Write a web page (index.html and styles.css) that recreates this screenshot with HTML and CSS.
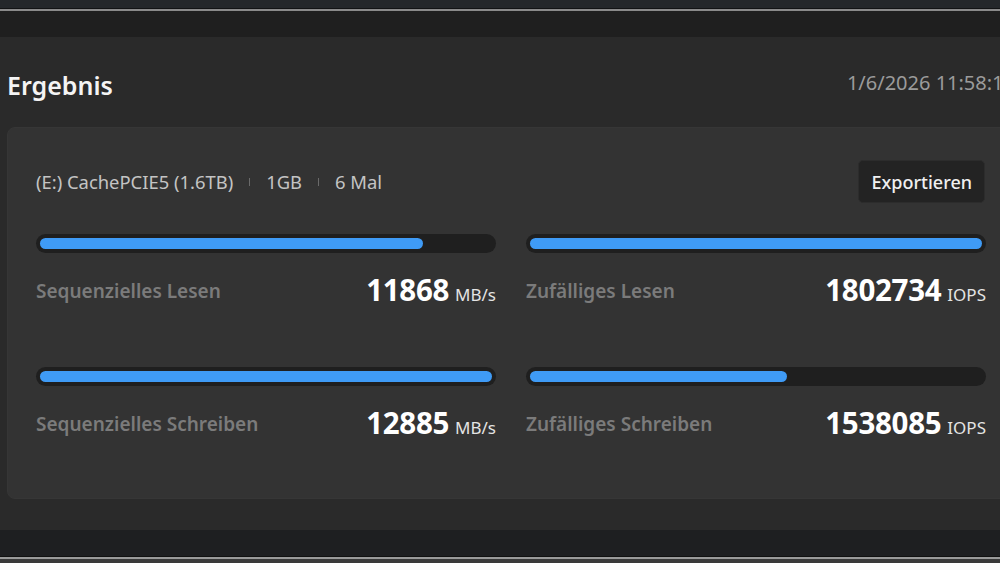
FILE: index.html
```html
<!DOCTYPE html>
<html lang="de">
<head>
<meta charset="utf-8">
<title>Ergebnis</title>
<link rel="stylesheet" href="styles.css">
</head>
<body>
<div class="screen">
  <div class="topstrip"></div>
  <div class="topband"></div>
  <main class="panel">
    <header class="head">
      <h1 class="title">Ergebnis</h1>
      <div class="stamp">1/6/2026 11:58:17</div>
    </header>
    <section class="card">
      <div class="inforow">
        <div class="info">
          <span>(E:) CachePCIE5 (1.6TB)</span>
          <span class="sep"></span>
          <span>1GB</span>
          <span class="sep"></span>
          <span>6 Mal</span>
        </div>
        <button class="export">Exportieren</button>
      </div>
      <div class="grid">
        <div class="metric">
          <div class="track"><div class="fill" style="width:84.7%"></div></div>
          <div class="row">
            <span class="label">Sequenzielles Lesen</span>
            <span class="value">11868<span class="unit">MB/s</span></span>
          </div>
        </div>
        <div class="metric">
          <div class="track"><div class="fill" style="width:100%"></div></div>
          <div class="row">
            <span class="label">Zufälliges Lesen</span>
            <span class="value">1802734<span class="unit">IOPS</span></span>
          </div>
        </div>
        <div class="metric">
          <div class="track"><div class="fill" style="width:100%"></div></div>
          <div class="row">
            <span class="label">Sequenzielles Schreiben</span>
            <span class="value">12885<span class="unit">MB/s</span></span>
          </div>
        </div>
        <div class="metric">
          <div class="track"><div class="fill" style="width:56.9%"></div></div>
          <div class="row">
            <span class="label">Zufälliges Schreiben</span>
            <span class="value">1538085<span class="unit">IOPS</span></span>
          </div>
        </div>
      </div>
    </section>
  </main>
  <div class="bottomband"></div>
  <div class="bottomstrip"></div>
</div>
</body>
</html>
```
FILE: styles.css
```css
html, body {
  margin: 0;
  padding: 0;
  width: 1000px;
  height: 563px;
  overflow: hidden;
  background: #2a2a2a;
  font-family: "Noto Sans", "Open Sans", sans-serif;
}
.screen {
  width: 1000px;
  height: 563px;
  display: flex;
  flex-direction: column;
  overflow: hidden;
}
.topstrip {
  height: 8px;
  background: #24272a;
  border-bottom: 1px solid #121314;
}
.topband {
  height: 26px;
  background: #1f1f1f;
  border-top: 2px solid #8a8a8a;
}
.panel {
  height: 493px;
  background: #2a2a2a;
  padding: 0 0 0 7px;
  box-sizing: border-box;
  display: flex;
  flex-direction: column;
}
.head {
  width: 1008px;
  height: 90px;
  display: flex;
  align-items: center;
  justify-content: space-between;
}
.title {
  margin: 0;
  font-size: 25px;
  font-weight: 600;
  color: #f4f4f4;
  padding-top: 6px;
}
.stamp {
  font-size: 20px;
  color: #9b9b9b;
  white-space: nowrap;
}
.card {
  width: 1008px;
  height: 372px;
  box-sizing: border-box;
  background: #333333;
  border-radius: 8px;
  border: 1px solid #363636;
  padding: 32px 29px 0 28px;
  flex: none;
}
.inforow {
  display: flex;
  align-items: center;
  justify-content: space-between;
  height: 43px;
}
.info {
  display: flex;
  align-items: center;
  gap: 16px;
  font-size: 18.4px;
  color: #c4c4c4;
}
.sep {
  width: 1px;
  height: 8px;
  background: #6a6a6a;
}
.export {
  height: 43px;
  padding: 0 12px;
  background: #232323;
  border: 1px solid #2c2c2c;
  border-radius: 5px;
  font-family: inherit;
  font-size: 18px;
  font-weight: 500;
  color: #f0f0f0;
}
.grid {
  margin-top: 31px;
  display: grid;
  grid-template-columns: 460px 460px;
  column-gap: 30px;
  row-gap: 62px;
}
.track {
  height: 19px;
  box-sizing: border-box;
  padding: 4px;
  background: #1f1f1f;
  border-radius: 10px;
}
.fill {
  height: 11px;
  background: #3f9bf6;
  border-radius: 6px;
}
.row {
  margin-top: 20px;
  height: 32px;
  display: flex;
  align-items: center;
  justify-content: space-between;
}
.label {
  font-size: 19px;
  font-weight: 600;
  color: #7b7b7b;
  padding-top: 3px;
}
.value {
  font-size: 29.5px;
  font-weight: 700;
  color: #ffffff;
  letter-spacing: -0.3px;
}
.unit {
  font-size: 17px;
  font-weight: 400;
  color: #e4e4e4;
  margin-left: 6px;
  letter-spacing: 0;
}
.bottomband {
  height: 26px;
  background: #1e1f21;
  border-bottom: 1px solid #111;
}
.bottomstrip {
  flex: 1;
  background: #3a3a3a;
  border-top: 2px solid #9a9a9a;
}
```
